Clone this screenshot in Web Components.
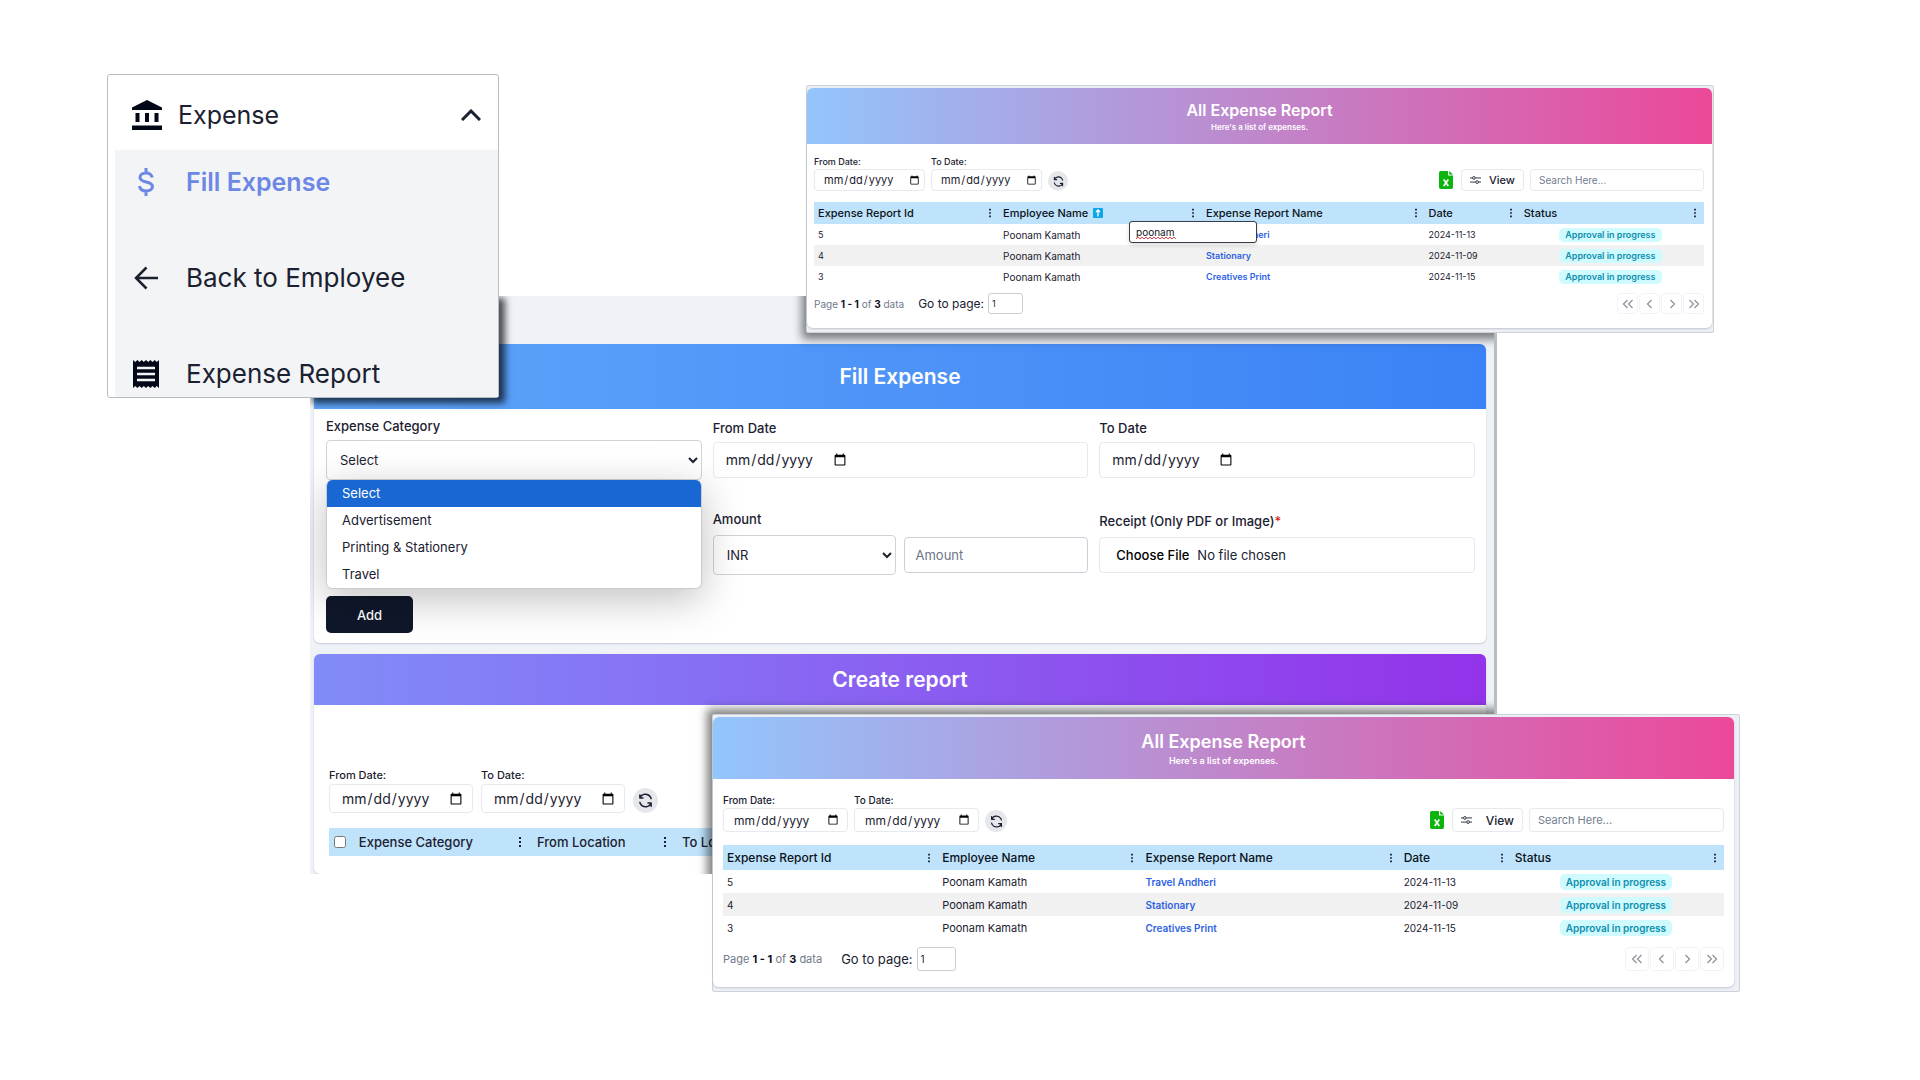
<!DOCTYPE html>
<html lang="en">
<head>
<meta charset="utf-8">
<title>Expense</title>
<style>
  body { margin: 0; background: #fff; color: #1b2130; font-family: Inter, "Open Sans", sans-serif; }
</style>
</head>
<body>
<expense-collage>
  <expense-window slot="form"></expense-window>
  <side-menu slot="menu"></side-menu>
  <report-window slot="filtered" filter="poonam"></report-window>
  <report-window slot="report" large></report-window>
</expense-collage>

<script>
const BASE = `
  *, *::before, *::after { box-sizing: border-box; }
  button, input, select { font: inherit; color: inherit; margin: 0; }
  h2, p, ul { margin: 0; padding: 0; }
`;

const ICONS = {
  bank: ['0 0 30 30', '<path fill="currentColor" d="M15 0 30 7.500V10H0V7.500zM3.500 13h4v9h-4zM13 13h4v9h-4zM22.500 13h4v9h-4zM0 25.500h30V30H0z"/>'],
  up: ['0 0 20 12', '<path fill="none" stroke="currentColor" stroke-width="3" d="m1 11 9-9 9 9"/>'],
  dollar: ['0 0 16 28', '<path fill="none" stroke="currentColor" stroke-width="3" d="M8 0v5M8 23v5M14.200 9.500C13.500 6.500 11 5 8 5 4.500 5 2 6.800 2 9.500c0 6 12.500 3 12.500 9 0 2.800-2.800 4.500-6.300 4.500-3.400 0-6.200-1.800-6.700-5"/>'],
  back: ['0 0 24 24', '<path fill="none" stroke="currentColor" stroke-width="2.500" d="M24 12H2M12.500 1.500 2 12l10.500 10.500"/>'],
  receipt: ['0 0 26 28', '<path fill="currentColor" d="m0 0 2.200 2 2.200-2 2.100 2 2.200-2 2.100 2L13 0l2.200 2 2.200-2 2.100 2 2.200-2 2.100 2L26 0v28l-2.200-2-2.100 2-2.200-2-2.100 2-2.200-2-2.200 2-2.200-2-2.100 2-2.200-2-2.100 2-2.200-2L0 28z"/><path stroke="#f3f4f6" stroke-width="2.400" d="M4 8h18M4 14h18M4 20h18"/>'],
  refresh: ['0 0 24 24', '<path fill="none" stroke="currentColor" stroke-width="2.400" stroke-linecap="round" stroke-linejoin="round" d="M3 3v5h5M3 8a9.500 9.500 0 0 1 17-1.500L21 9M21 21v-5h-5M21 16a9.500 9.500 0 0 1-17 1.500L3 15"/>'],
  excel: ['0 0 14 18', '<path fill="#0db40d" d="M1.700 0H9v4.500h5v11.800a1.700 1.700 0 0 1-1.700 1.700H1.700A1.700 1.700 0 0 1 0 16.300V1.700A1.700 1.700 0 0 1 1.700 0zM10.200 0 14 3.600h-3.800z"/><path stroke="#fff" stroke-width="1.700" d="m4.700 8.500 4.600 6.500M9.300 8.500 4.700 15"/>'],
  mixer: ['0 0 16 14', '<path fill="none" stroke="currentColor" stroke-width="1.300" d="M0 4h3.500M8 4h8M0 10h8M12.500 10H16"/><circle cx="5.700" cy="4" r="2" fill="none" stroke="currentColor" stroke-width="1.300"/><circle cx="10.300" cy="10" r="2" fill="none" stroke="currentColor" stroke-width="1.300"/>'],
  dots: ['0 0 4 12', '<path fill="currentColor" d="M1 1h2v2H1zM1 5h2v2H1zM1 9h2v2H1z"/>'],
  sort: ['0 0 10 10', '<rect width="10" height="10" rx="1" fill="#0ea5e9"/><path fill="none" stroke="#fff" stroke-width="1.300" d="M5 8.500V2M3 4l2-2 2 2"/>'],
  wave: ['0 0 40 4', '<path fill="none" stroke="#e5484d" d="m0 3 2-2 2 2 2-2 2 2 2-2 2 2 2-2 2 2 2-2 2 2 2-2 2 2 2-2 2 2 2-2 2 2 2-2 2 2 2-2 2 2"/>'],
  first: ['0 0 12 12', '<path fill="none" stroke="currentColor" stroke-width="1.200" d="M5.500 2 1.500 6l4 4M10.500 2l-4 4 4 4"/>'],
  prev: ['0 0 12 12', '<path fill="none" stroke="currentColor" stroke-width="1.200" d="M7.500 2l-4 4 4 4"/>'],
  next: ['0 0 12 12', '<path fill="none" stroke="currentColor" stroke-width="1.200" d="m4.500 2 4 4-4 4"/>'],
  last: ['0 0 12 12', '<path fill="none" stroke="currentColor" stroke-width="1.200" d="m1.500 2 4 4-4 4M6.500 2l4 4-4 4"/>']
};

class Part extends HTMLElement {
  connectedCallback() {
    if (this.shadowRoot) return;
    const t = document.createElement('template');
    t.innerHTML = `<style>${BASE}${this.css()}</style>${this.html()}`;
    this.attachShadow({ mode: 'open' }).append(t.content.cloneNode(true));
  }
}

/* <ui-icon name="..."> fills the box that its user gives it */
customElements.define('ui-icon', class extends Part {
  css() { return `:host { display: block; flex: none; } svg { display: block; width: 100%; height: 100%; }`; }
  html() {
    const [box, body] = ICONS[this.getAttribute('name')];
    return `<svg viewBox="${box}" aria-hidden="true">${body}</svg>`;
  }
});

/* Labelled date input, sized through custom properties */
customElements.define('date-field', class extends Part {
  css() { return `
    :host { display: block; width: var(--date-width, auto); }
    label { display: block; font-size: var(--label-size); line-height: var(--label-line); font-weight: 500; margin-bottom: var(--label-gap, 0px); white-space: nowrap; }
    input { display: flex; align-items: center; width: 100%; height: var(--date-height); padding: 0 var(--date-end) 0 var(--date-pad); border: 1px solid #e5e9f0; border-radius: 4px; background: #fff; font-size: var(--date-size); }
    input::-webkit-datetime-edit { flex: var(--date-flex, 1); padding: 0; }
    input::-webkit-calendar-picker-indicator { padding: 0; width: var(--date-icon); height: var(--date-icon); margin-left: 0; }
  `; }
  html() { return `<label for="d">${this.getAttribute('label')}</label><input id="d" type="date">`; }
});

/* Date range with reset button */
customElements.define('date-range', class extends Part {
  css() { return `
    :host { display: flex; align-items: flex-end; gap: var(--range-gap); }
    button { display: grid; place-items: center; width: var(--reset); height: var(--reset); padding: 0; border: 0; border-radius: 50%; background: #e5e7eb; }
    ui-icon { width: var(--reset-icon); height: var(--reset-icon); }
  `; }
  html() { return `<date-field label="From Date:"></date-field><date-field label="To Date:"></date-field>
    <button aria-label="Reset dates"><ui-icon name="refresh"></ui-icon></button>`; }
});

customElements.define('side-menu', class extends Part {
  css() { return `
    :host { display: block; background: #fff; border: 1px solid #b9bcc4; border-radius: 3px; padding-left: 7px; font-size: 26px; line-height: 44px; color: #1b2130; }
    button { display: flex; align-items: center; width: 100%; height: 75px; padding: 5px 17px 0; border: 0; background: none; text-align: left; font-size: 25px; }
    button span { flex: 1; margin-left: 16px; }
    .bank { width: 30px; height: 30px; color: #020817; }
    .up { width: 20px; height: 12px; }
    nav { display: flex; flex-direction: column; gap: 52px; padding: 10px 17px 1px; background: #f3f4f6; }
    a { display: flex; align-items: center; gap: 26px; color: inherit; text-decoration: none; white-space: nowrap; }
    .active { color: #6c87e4; font-weight: 600; font-size: 25px; }
    .slot { display: grid; place-items: center; width: 28px; }
    .dollar { width: 16px; height: 28px; }
    .back { width: 24px; height: 24px; }
    .receipt { width: 26px; height: 28px; color: #020817; }
  `; }
  html() { return `
    <button aria-expanded="true"><ui-icon class="bank" name="bank"></ui-icon><span>Expense</span><ui-icon class="up" name="up"></ui-icon></button>
    <nav>
      <a class="active" href="#fill"><span class="slot"><ui-icon class="dollar" name="dollar"></ui-icon></span>Fill Expense</a>
      <a href="#employee"><span class="slot"><ui-icon class="back" name="back"></ui-icon></span>Back to Employee</a>
      <a href="#report"><span class="slot"><ui-icon class="receipt" name="receipt"></ui-icon></span>Expense Report</a>
    </nav>`; }
});

/* Card with a gradient title bar */
customElements.define('title-card', class extends Part {
  css() { return `
    :host { display: block; background: #fff; border-radius: var(--card-radius, 6px); box-shadow: 0 1px 2px #0f172a30; }
    header { display: flex; flex-direction: column; align-items: center; justify-content: center; height: var(--bar); padding-top: var(--bar-pad, 0px); background: var(--bar-fill); color: #fff; border-radius: var(--card-radius, 6px) var(--card-radius, 6px) 0 0; }
    h2 { font-size: var(--title); line-height: var(--title-line); font-weight: 600; }
    p { font-size: var(--sub); line-height: var(--sub-line); font-weight: 600; }
  `; }
  html() {
    const sub = this.getAttribute('sub');
    return `<header><h2>${this.getAttribute('heading')}</h2>${sub ? `<p>${sub}</p>` : ''}</header><slot></slot>`;
  }
});

customElements.define('expense-window', class extends Part {
  css() { return `
    :host { display: block; position: relative; overflow: hidden; background: #eff3f8; border-right: 3px solid #b9bcc1; padding: 48px 8px 0 4px; font-size: 13px; line-height: 20px; }
    title-card { --title: 21px; --title-line: 30px; }
    .fill { --bar: 65px; --bar-fill: linear-gradient(to right, #60a5fa, #3b82f6); }
    .create { --bar: 51px; --bar-fill: linear-gradient(to right, #818cf8, #9333ea); margin-top: 11px; }
    form { padding: 7px 11px 10px 12px; }
    .fields { display: grid; grid-template-columns: repeat(3, minmax(0, 1fr)); column-gap: 11px; row-gap: 29px; align-items: center;
      --label-size: 13px; --label-line: 20px; --label-gap: 4px; --date-height: 36px; --date-pad: 11px; --date-end: 11px; --date-size: 14px; --date-flex: none; --date-icon: 14px; }
    label { display: block; font-weight: 500; margin-bottom: 4px; }
    .row2 label { margin-bottom: 6px; }
    select { display: block; width: 100%; height: 40px; padding: 0 0 0 9px; border: 1px solid #cfd3da; border-radius: 4px; background: #fff; }
    .category { position: relative; }
    .amount { grid-column: 2; }
    .pair { display: grid; grid-template-columns: 1fr 1fr; gap: 8px; align-items: center; }
    .pair input { width: 100%; height: 36px; padding: 0 10px; border: 1px solid #cbd0d8; border-radius: 4px; }
    input::placeholder { color: #6b7688; }
    input[type=file] { display: block; width: 100%; height: 36px; padding: 7px 16px; border: 1px solid #e5e9f0; border-radius: 4px; line-height: 20px; }
    ::file-selector-button { border: 0; padding: 0; margin-right: 8px; background: none; font: inherit; font-weight: 500; }
    .req { color: #dc2626; }
    ul { position: absolute; z-index: 1; top: 100%; left: 0; right: 0; list-style: none; background: #fff; border: solid #c8ccd2; border-width: 0 1px 1px; border-radius: 6px; overflow: hidden; box-shadow: 0 10px 40px #00000040; }
    li { padding: 0 15px; line-height: 27px; }
    li[aria-selected=true] { background: #1967d2; color: #fff; }
    .add { display: block; width: 87px; height: 37px; margin-top: 21px; border: 0; border-radius: 5px; background: #0f172a; color: #fff; font-weight: 500; }
    .list { padding: 62px 15px 18px; --label-size: 11px; --label-line: 16px; --label-gap: 1px; --date-width: 144px; --date-height: 29px; --date-pad: 11px; --date-end: 15px; --date-size: 14px; --date-icon: 14px; --range-gap: 8px; --reset: 25px; --reset-icon: 15px; }
    table { width: 100%; margin-top: 15px; border-collapse: collapse; table-layout: fixed; background: #bfe3fb; }
    th { height: 28px; padding: 0 8px 0 7px; font-weight: 500; text-align: left; white-space: nowrap; }
    th div { display: flex; align-items: center; justify-content: space-between; }
    th ui-icon { width: 4px; height: 12px; }
    th input { display: block; width: 12px; height: 12px; }
    th:first-child { padding: 0 5px; }
    .shade { position: absolute; z-index: 2; pointer-events: none; }
    .shade.menu { top: 0; left: 0; right: 84%; height: 101px; box-shadow: 4px 4px 7px 2px #000000b0; }
    .shade.top { top: -20px; left: 42%; right: -20px; height: 56px; box-shadow: -2px 4px 9px 3px #00000080; }
    .shade.bottom { top: 419px; left: 34%; right: -20px; bottom: -20px; box-shadow: -3px -3px 9px 3px #00000080; }
  `; }
  html() { return `
    <title-card class="fill" heading="Fill Expense">
      <form>
        <div class="fields">
          <div class="category">
            <label for="cat">Expense Category</label>
            <select id="cat"><option>Select</option><option>Advertisement</option><option>Printing &amp; Stationery</option><option>Travel</option></select>
            <ul role="listbox" aria-label="Expense Category">
              <li role="option" aria-selected="true">Select</li><li role="option">Advertisement</li><li role="option">Printing &amp; Stationery</li><li role="option">Travel</li>
            </ul>
          </div>
          <date-field label="From Date"></date-field>
          <date-field label="To Date"></date-field>
          <div class="amount row2">
            <label for="amt">Amount</label>
            <div class="pair"><select aria-label="Currency"><option>INR</option></select><input id="amt" placeholder="Amount"></div>
          </div>
          <div class="row2">
            <label for="file">Receipt (Only PDF or Image)<span class="req">*</span></label>
            <input id="file" type="file">
          </div>
        </div>
        <button class="add" type="button">Add</button>
      </form>
    </title-card>
    <title-card class="create" heading="Create report">
      <div class="list">
        <date-range></date-range>
        <table>
          <colgroup><col style="width:2%"><col style="width:15.6%"><col style="width:12.7%"><col></colgroup>
          <thead><tr><th><input type="checkbox" aria-label="Select all"></th>
            <th><div>Expense Category<ui-icon name="dots"></ui-icon></div></th>
            <th><div>From Location<ui-icon name="dots"></ui-icon></div></th>
            <th>To Location</th></tr></thead>
        </table>
      </div>
    </title-card>
    <div class="shade menu"></div><div class="shade top"></div><div class="shade bottom"></div>`; }
});

customElements.define('report-window', class extends Part {
  css() { return `
    :host { display: block; background: #eceff4; border: 1px solid #cdd1d8; border-radius: 2px; padding: 2px 1px 4px 0; --bar-pad: 2px;
      --bar: 56px; --title: 16px; --title-line: 20px; --sub: 8px; --sub-line: 14px; --row: 21px; --head: 22px; --cell: 9px; --name: 10px; --th: 11px; --foot: 21px; --foot-gap: 6px; --foot-pad: 14px; --go: 12px;
      --label-size: 9px; --label-line: 14px; --date-width: 111px; --date-height: 22px; --date-pad: 8px; --date-end: 14px; --date-size: 11px; --date-icon: 11px; --range-gap: 6px; --reset: 20px; --reset-icon: 11px; --gap: 11px; --side: 7px; --view: 63px; --search: 174px; --search-size: 10px; }
    :host([large]) { padding: 2px 5px 4px 0; --bar-pad: 4px;
      --bar: 62px; --title: 18px; --title-line: 22px; --sub: 9px; --sub-line: 16px; --row: 23px; --head: 25px; --cell: 10px; --name: 11px; --th: 12px; --foot: 24px; --foot-gap: 8px; --foot-pad: 16px; --go: 13px;
      --label-size: 10px; --label-line: 16px; --date-width: 125px; --date-height: 24px; --date-pad: 9px; --date-end: 20px; --date-size: 12px; --date-icon: 12px; --range-gap: 6px; --reset: 22px; --reset-icon: 13px; --gap: 13px; --side: 10px; --view: 71px; --search: 195px; --search-size: 11px; }
    title-card { --bar-fill: linear-gradient(to right, #93c5fd, #ec4899); }
    .body { padding: var(--gap) 8px var(--foot-pad) var(--side); font-size: var(--cell); }
    :host([large]) .body { padding-right: 10px; }
    .tools { display: flex; align-items: flex-end; gap: 6px; margin-bottom: var(--gap); }
    date-range { margin-right: auto; }
    .tools > button, .search { height: var(--date-height); border: 1px solid #e5e9f0; border-radius: 4px; background: #fff; }
    .tools > .xls { width: 14px; margin-right: 2px; padding: 0; border: 0; background: none; display: grid; place-items: center; }
    .xls ui-icon { width: 14px; height: 18px; }
    .view { display: flex; align-items: center; justify-content: space-between; width: var(--view); padding: 0 8px; font-weight: 500; }
    .view ui-icon { width: 11px; height: 10px; }
    .view span { font-size: var(--th); }
    .search { width: var(--search); padding: 0 8px; font-size: var(--search-size); }
    .search::placeholder { color: #717c8e; }
    table { width: 100%; border-collapse: collapse; table-layout: fixed; }
    tr { height: var(--row); }
    thead tr { height: var(--head); background: #bfe3fb; }
    th, td { padding: 0 7px 0 4px; text-align: left; white-space: nowrap; position: relative; }
    th { font-size: var(--th); font-weight: 500; color: #0b1220; }
    th div { display: flex; align-items: center; gap: 5px; }
    th .dots { width: 4px; height: 10px; margin-left: auto; }
    th .sort { width: 10px; height: 10px; }
    tbody tr:nth-child(even) { background: #f1f1f1; }
    td:nth-child(2) { font-size: var(--name); }
    td a { color: #2f62e4; font-weight: 600; text-decoration: none; }
    td:last-child { text-align: center; }
    .badge { display: inline-block; padding: 0 6px; line-height: 14px; border-radius: 5px; background: #cffafe; color: #0e8fae; font-weight: 600; }
    :host([large]) .badge { line-height: 16px; }
    .filter { position: absolute; z-index: 1; top: calc(100% - 3px); right: -55px; width: 128px; }
    .filter input { display: block; width: 100%; height: 22px; padding: 0 6px; border: 1px solid #353c4a; border-radius: 3px; background: #fff; font-size: 10px; font-weight: 400; box-shadow: 0 2px 4px #00000025; }
    .filter ui-icon { position: absolute; left: 7px; bottom: 3px; width: 40px; height: 4px; }
    footer { display: flex; align-items: center; height: var(--foot); margin-top: var(--foot-gap); color: #6f7a8b; font-size: var(--name); }
    b { color: #0b1220; }
    footer label { margin: 0 4px 0 14px; font-size: var(--go); color: #1b2130; }
    :host([large]) footer label { margin-left: 19px; }
    footer input { width: 35px; height: 100%; padding: 0 3px; border: 1px solid #c9cdd4; border-radius: 3px; color: #1b2130; font-size: var(--cell); }
    :host([large]) footer input { width: 39px; }
    .pages { display: flex; gap: 1px; margin-left: auto; height: 100%; color: #8b9099; }
    .pages button { display: grid; place-items: center; width: var(--foot); height: 100%; padding: 0; border: 1px solid #f1f3f6; border-radius: 4px; background: #fff; }
    .pages ui-icon { width: 12px; height: 12px; }
  `; }
  html() {
    const widths = this.hasAttribute('large') ? [21.5, 20.3, 25.8, 11.1, 21.3] : [20.8, 22.8, 25, 10.7, 20.7];
    const filter = this.getAttribute('filter');
    const heads = ['Expense Report Id', 'Employee Name', 'Expense Report Name', 'Date', 'Status'];
    const rows = [[5, 'Travel Andheri', '2024-11-13'], [4, 'Stationary', '2024-11-09'], [3, 'Creatives Print', '2024-11-15']];
    return `<title-card heading="All Expense Report" sub="Here's a list of expenses."><div class="body">
      <div class="tools">
        <date-range></date-range>
        <button class="xls" aria-label="Export to Excel"><ui-icon name="excel"></ui-icon></button>
        <button class="view"><ui-icon name="mixer"></ui-icon><span>View</span></button>
        <input class="search" aria-label="Search" placeholder="Search Here...">
      </div>
      <table>
        <colgroup>${widths.map(w => `<col style="width:${w}%">`).join('')}</colgroup>
        <thead><tr>${heads.map((h, i) => `<th><div>${h}${filter && i === 1 ? '<ui-icon class="sort" name="sort"></ui-icon>' : ''}<ui-icon class="dots" name="dots"></ui-icon></div>${filter && i === 1 ? `<span class="filter"><input aria-label="Filter by employee" value="${filter}"><ui-icon name="wave"></ui-icon></span>` : ''}</th>`).join('')}</tr></thead>
        <tbody>${rows.map(r => `<tr><td>${r[0]}</td><td>Poonam Kamath</td><td><a href="#r${r[0]}">${r[1]}</a></td><td>${r[2]}</td><td><span class="badge">Approval in progress</span></td></tr>`).join('')}</tbody>
      </table>
      <footer><span>Page <b>1 - 1</b> of <b>3</b> data</span><label for="go">Go to page:</label><input id="go" value="1">
        <div class="pages">${['first', 'prev', 'next', 'last'].map(n => `<button aria-label="${n} page"><ui-icon name="${n}"></ui-icon></button>`).join('')}</div></footer>
    </div></title-card>`;
  }
});

/* Overlapping windows share one row of a proportional grid */
customElements.define('expense-collage', class extends Part {
  css() { return `
    :host { display: grid; align-items: start; min-height: 100vh;
      grid-template-columns: minmax(0, 107fr) minmax(0, 203fr) minmax(0, 189fr) minmax(0, 213fr) minmax(0, 94fr) minmax(0, 691fr) minmax(0, 217fr) minmax(0, 26fr) minmax(0, 180fr); }
    ::slotted(*) { grid-row: 1; }
    [name=form]::slotted(*) { grid-column: 3 / 7; margin-top: 296px; }
    [name=menu]::slotted(*) { grid-column: 2 / 4; margin-top: 74px; z-index: 3; }
    [name=filtered]::slotted(*) { grid-column: 6 / 8; margin-top: 85px; z-index: 3; }
    [name=report]::slotted(*) { grid-column: 5 / 9; margin-top: 714px; z-index: 3; }
  `; }
  html() { return `<slot name="form"></slot><slot name="menu"></slot><slot name="filtered"></slot><slot name="report"></slot>`; }
});
</script>
</body>
</html>
